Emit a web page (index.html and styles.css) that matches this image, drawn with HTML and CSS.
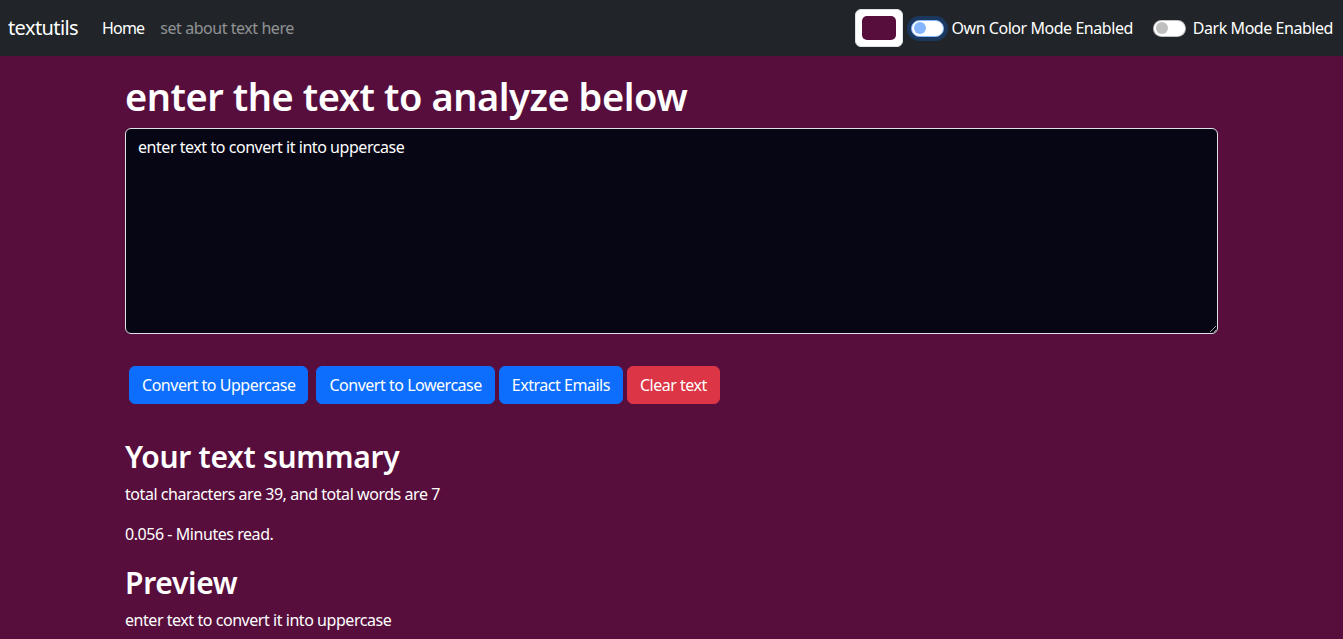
FILE: index.html
```html
<!DOCTYPE html>
<html lang="en">
<head>
<meta charset="utf-8">
<title>textutils</title>
<link rel="stylesheet" href="styles.css">
</head>
<body>
<nav class="navbar">
  <a class="brand" href="#">textutils</a>
  <ul class="nav">
    <li><a class="nav-link active" href="#">Home</a></li>
    <li><a class="nav-link disabled" href="#">set about text here</a></li>
  </ul>
  <div class="nav-right">
    <div class="color-input"><span class="swatch"></span></div>
    <label class="form-check">
      <span class="switch focused"><span class="knob"></span></span>
      <span class="check-label">Own Color Mode Enabled</span>
    </label>
    <label class="form-check">
      <span class="switch"><span class="knob"></span></span>
      <span class="check-label">Dark Mode Enabled</span>
    </label>
  </div>
</nav>

<main class="container">
  <section class="block first">
    <h1>enter the text to analyze below</h1>
    <textarea class="text-box" rows="8">enter text to convert it into uppercase</textarea>
    <div class="buttons">
      <button class="btn btn-primary b1">Convert to Uppercase</button>
      <button class="btn btn-primary b2">Convert to Lowercase</button>
      <button class="btn btn-primary b3">Extract Emails</button>
      <button class="btn btn-danger b4">Clear text</button>
    </div>
  </section>
  <section class="block">
    <h2>Your text summary</h2>
    <p>total characters are 39, and total words are 7</p>
    <p>0.056 - Minutes read.</p>
    <h2>Preview</h2>
    <p>enter text to convert it into uppercase</p>
  </section>
</main>
</body>
</html>
```

FILE: styles.css
```css
* { box-sizing: border-box; }
html, body { margin: 0; padding: 0; }
body {
  background: #570e3d;
  color: #ffffff;
  font-family: "Noto Sans", "Open Sans", sans-serif;
  font-size: 16px;
  line-height: 1.5;
  letter-spacing: -0.45px;
  min-height: 639px;
}
a { text-decoration: none; }

.navbar {
  display: flex;
  align-items: center;
  height: 56px;
  background: #212529;
  padding: 8px 10px 8px 8px;
}
.brand {
  color: #fff;
  font-size: 20px;
  line-height: 30px;
  letter-spacing: -0.6px;
  padding: 5px 0;
  margin-right: 16px;
}
.nav {
  display: flex;
  list-style: none;
  margin: 0;
  padding: 0;
}
.nav-link {
  display: block;
  padding: 8px;
  font-size: 16px;
  line-height: 24px;
}
.nav-link.active { color: #fff; letter-spacing: -0.8px; }
.nav-link.disabled { color: rgba(255,255,255,0.5); }

.nav-right {
  margin-left: auto;
  display: flex;
  align-items: center;
}
.color-input {
  width: 48px;
  height: 38px;
  padding: 6px;
  background: #fff;
  border: 1px solid #dee2e6;
  border-radius: 6px;
  display: flex;
}
.swatch {
  flex: 1;
  background: #570e3d;
  border-radius: 5px;
}
.form-check {
  display: flex;
  align-items: center;
  gap: 7px;
  margin-left: 8px;
  cursor: pointer;
}
.form-check + .form-check { margin-left: 20px; }
.switch {
  width: 33px;
  height: 17px;
  border-radius: 9px;
  border: 1px solid rgba(0,0,0,0.25);
  background: #fff;
  display: flex;
  align-items: center;
  padding: 0 1px 0 2px;
}
.switch .knob {
  width: 12px;
  height: 12px;
  border-radius: 50%;
  background: #bfbfbf;
}
.switch.focused {
  border-color: #86b7fe;
  box-shadow: 0 0 0 4px rgba(13,110,253,0.25);
}
.switch.focused .knob { background: #86b7fe; }
.check-label {
  color: #fff;
  font-size: 16px;
  line-height: 24px;
  white-space: nowrap;
}

.container {
  width: 1093px;
  margin: 0 auto;
}
.block { margin: 16px 0; }
h1 {
  font-size: 38px;
  line-height: 48px;
  font-weight: 600;
  letter-spacing: -0.45px;
  margin: 0 0 8px;
}
h2 {
  font-size: 30px;
  line-height: 36px;
  font-weight: 600;
  letter-spacing: -0.3px;
  padding-top: 3px;
  margin: 0 0 7px;
}
p { margin: 0 0 16px; }
.text-box {
  display: block;
  width: 100%;
  height: 206px;
  padding: 6px 12px;
  background: #060615;
  color: #fff;
  border: 1px solid #dee2e6;
  border-radius: 6px;
  font-family: inherit;
  font-size: 16px;
  line-height: 24px;
  letter-spacing: -0.45px;
  margin-bottom: 16px;
  resize: vertical;
}
.buttons {
  display: flex;
  padding-top: 16px;
  margin-bottom: 32px;
}
.btn {
  font-family: inherit;
  font-size: 16px;
  line-height: 24px;
  letter-spacing: -0.48px;
  padding: 6px 12px;
  border: 1px solid transparent;
  border-radius: 6px;
  color: #fff;
  cursor: pointer;
}
.btn-primary { background: #0d6efd; border-color: #0d6efd; }
.btn-danger { background: #dc3545; border-color: #dc3545; }
.b1 { margin-left: 4px; margin-right: 8px; }
.b2, .b3 { margin-right: 4px; }
```
